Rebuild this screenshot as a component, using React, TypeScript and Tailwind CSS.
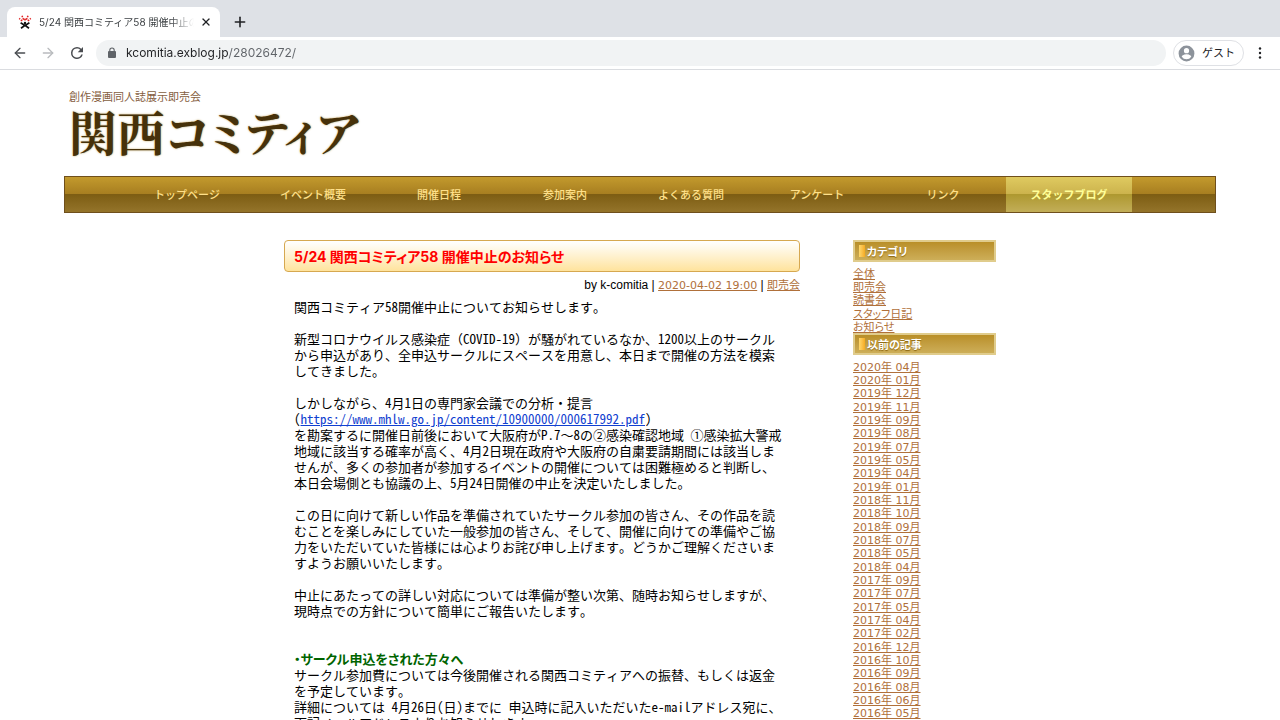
import { ArrowLeft, ArrowRight, Plus, X } from "lucide-react";

const NAV = [
  "トップページ",
  "イベント概要",
  "開催日程",
  "参加案内",
  "よくある質問",
  "アンケート",
  "リンク",
  "スタッフブログ",
];

const CATEGORIES = ["全体", "即売会", "読書会", "スタッフ日記", "お知らせ"];

const ARCHIVES = [
  "2020年 04月", "2020年 01月",
  "2019年 12月", "2019年 11月", "2019年 09月", "2019年 08月", "2019年 07月", "2019年 05月", "2019年 04月", "2019年 01月",
  "2018年 11月", "2018年 10月", "2018年 09月", "2018年 07月", "2018年 05月", "2018年 04月",
  "2017年 09月", "2017年 07月", "2017年 05月", "2017年 04月", "2017年 02月",
  "2016年 12月", "2016年 10月", "2016年 09月", "2016年 08月", "2016年 06月", "2016年 05月",
];

const PDF_URL = "https://www.mhlw.go.jp/content/10900000/000617992.pdf";

function Lines({ rows }: { rows: string[] }) {
  return (
    <p className="mb-4">
      {rows.map(row => <span key={row} className="block whitespace-pre">{row}</span>)}
    </p>
  );
}

function Favicon() {
  return (
    <svg viewBox="0 0 14 14" className="size-[14px] shrink-0" aria-hidden="true">
      <g stroke="#e02020" strokeWidth="1.5" strokeDasharray="1.8 1">
        <path d="M4.2 6 1.2 3.4M5.6 4.8 4 .8M8.4 4.8 10 .8M9.800 6l3-2.600M7 5.400V2.600" />
      </g>
      <circle cx="7" cy="8" r="1.200" fill="#111" />
      <path d="M2.600 7.800 7 10.400l4.400-2.600M3 13.200l4-3 4 3" fill="none" stroke="#111" strokeWidth="1.700" />
    </svg>
  );
}

function BrowserBar() {
  return (
    <header className="shrink-0 font-['Inter','Noto_Sans_CJK_JP',sans-serif]">
      <div className="flex h-[37px] items-end bg-[#dee1e6] pl-[7px]">
        <div className="flex h-[30px] w-[213px] items-center rounded-t-lg bg-white pr-2 pl-[11px]">
          <Favicon />
          <span className="ml-[7px] w-[155px] overflow-hidden text-[10px] whitespace-nowrap text-[#3c4043] [mask-image:linear-gradient(90deg,#000_85%,transparent)]">
            5/24 関西コミティア58 開催中止のお知らせ
          </span>
          <button aria-label="タブを閉じる" className="ml-auto flex size-3 items-center justify-center">
            <X className="size-3 text-[#202124]" strokeWidth={2.6} />
          </button>
        </div>
        <button aria-label="新しいタブ" className="ml-3 flex h-[30px] items-center">
          <Plus className="size-4 text-[#202124]" strokeWidth={2.4} />
        </button>
      </div>
      <div className="flex h-[33px] items-center border-b border-[#dadce0] bg-white px-3">
        <button aria-label="戻る"><ArrowLeft className="size-4 text-[#4a4d51]" /></button>
        <button aria-label="進む" className="ml-3"><ArrowRight className="size-4 text-[#b9bbbe]" /></button>
        <button aria-label="再読み込み" className="ml-3">
          <svg viewBox="0 0 24 24" className="size-[18px] fill-[#4a4d51]">
            <path d="M17.65 6.35A7.96 7.96 0 0 0 12 4a8 8 0 1 0 7.73 10h-2.08A6 6 0 1 1 12 6c1.66 0 3.14.69 4.22 1.78L13 11h7V4l-2.35 2.35z" />
          </svg>
        </button>
        <label className="ml-[10px] flex h-[26px] flex-1 items-center rounded-full bg-[#f1f3f4] pl-[10px]">
          <svg viewBox="0 0 24 24" className="size-3 fill-[#5f6368]" aria-hidden="true">
            <path d="M18 8h-.5V6.5a5.500 5.500 0 0 0-11 0V8H6a2 2 0 0 0-2 2v10a2 2 0 0 0 2 2h12a2 2 0 0 0 2-2V10a2 2 0 0 0-2-2zM8.700 6.500a3.300 3.300 0 0 1 6.600 0V8H8.700z" />
          </svg>
          <input
            aria-label="アドレス"
            defaultValue="kcomitia.exblog.jp/28026472/"
            className="ml-2 flex-1 bg-[linear-gradient(90deg,#202124_102px,#5f6368_102px)] bg-clip-text text-[12px] text-transparent outline-none"
          />
        </label>
        <button className="ml-[7px] flex h-[26px] w-[71px] items-center rounded-full border border-[#dfe1e5] pl-[3px] text-[11px] text-[#202124]">
          <svg viewBox="0 0 24 24" className="size-[19px] fill-[#8d939b]" aria-hidden="true">
            <path d="M12 2a10 10 0 1 0 0 20 10 10 0 0 0 0-20zm0 3.200a3.300 3.300 0 1 1 0 6.600 3.300 3.300 0 0 1 0-6.600zM12 19.200a7.200 7.200 0 0 1-6-3.200c0-2 4-3.100 6-3.100s6 1.100 6 3.100a7.200 7.200 0 0 1-6 3.200z" />
          </svg>
          <span className="ml-[6px]">ゲスト</span>
        </button>
        <button aria-label="メニュー" className="ml-2">
          <svg viewBox="0 0 16 16" className="size-4 fill-[#202124]">
            <circle cx="8" cy="3.500" r="1.200" />
            <circle cx="8" cy="8" r="1.200" />
            <circle cx="8" cy="12.500" r="1.200" />
          </svg>
        </button>
      </div>
    </header>
  );
}

function SideHeading({ children }: { children: string }) {
  return (
    <h2 className="flex h-[22px] items-center border-2 border-[#e0cc8c] bg-linear-to-b from-[#b98f27] to-[#cdae58] pl-1 text-[11px] leading-4 font-bold text-white [font-feature-settings:'palt'] [text-shadow:0_1px_1px_#8a6510]">
      <span className="mr-[2px] h-3 w-[6px] bg-linear-to-r from-[#ffd86a] to-[#f5ab1e]" />
      <span className="pt-[3px]">{children}</span>
    </h2>
  );
}

function SideList({ items }: { items: string[] }) {
  return (
    <ul className="mt-[6px] -mb-px text-[11px] leading-[13px] [font-feature-settings:'palt']">
      {items.map(item => (
        <li key={item} className="nth-[3n]:mb-px">
          <a href="#" className="text-[#b0703a] underline">{item}</a>
        </li>
      ))}
    </ul>
  );
}

export default function App() {
  return (
    <div className="flex h-screen flex-col overflow-hidden bg-white font-['Liberation_Sans','Noto_Sans_CJK_JP',sans-serif] text-black">
      <BrowserBar />

      <div className="mx-auto w-[90%]">
        <div className="h-[106px] pt-[19px] pl-[5px]">
          <p className="text-[11px] leading-4 text-[#86603f]">創作漫画同人誌展示即売会</p>
          <h1 className="font-['Noto_Serif_CJK_JP','Noto_Sans_CJK_JP',serif] text-[48px] leading-[52px] font-bold text-[#46310a] [font-feature-settings:'palt'] [text-shadow:0_0_2px_#b99d55]">
            関西コミティア
          </h1>
        </div>

        {/* Global navigation */}
        <nav className="flex h-[37px] justify-center border border-[#6f4f1c] bg-[linear-gradient(#c39a2d,#a67d20_50%,#7d5d13_50%,#94742a)] pr-6">
          {NAV.map((label, i) => (
            <a
              key={label}
              href="#"
              className={i === NAV.length - 1
                ? "flex w-[126px] items-center justify-center bg-[linear-gradient(#dfca60,#cbb24c_50%,#ae9830_50%,#c2ae58)] pt-[2px] text-[11px] font-bold text-[#ffff99]"
                : "flex w-[126px] items-center justify-center pt-[2px] text-[11px] font-medium text-[#ffe08a]"}
            >
              {label}
            </a>
          ))}
        </nav>
      </div>

      <div className="mx-auto mt-[27px] flex w-full max-w-[712px] gap-[53px]">
        <main className="min-w-0 flex-1">
          <h2 className="flex h-8 items-center rounded-[4px] border border-[#d6a850] bg-linear-to-b from-white to-[#ffe39c] pl-[9px] font-['Inter','Noto_Sans_CJK_JP',sans-serif] text-[14px] font-bold text-[#ff0000] [font-feature-settings:'palt']">
            5/24 関西コミティア58 開催中止のお知らせ
          </h2>
          <p className="mt-[5px] text-right text-[12px] leading-4">
            by k-comitia |{" "}
            <a href="#" className="font-['DejaVu_Sans',sans-serif] text-[11px] text-[#b0703a] underline">2020-04-02 19:00</a>
            {" | "}
            <a href="#" className="text-[11px] text-[#b0703a] underline">即売会</a>
          </p>

          <article className="mt-[5px] pl-[10px] font-['Noto_Sans_Mono_CJK_JP','Noto_Sans_CJK_JP',monospace] text-[13px] leading-4">
            <Lines rows={["関西コミティア58開催中止についてお知らせします。"]} />
            <Lines
              rows={[
                "新型コロナウイルス感染症（COVID-19）が騒がれているなか、1200以上のサークル",
                "から申込があり、全申込サークルにスペースを用意し、本日まで開催の方法を模索",
                "してきました。",
              ]}
            />
            <p>
              しかしながら、4月1日の専門家会議での分析・提言<br />
              (<a href="#" className="text-[#1040d0] underline">{PDF_URL}</a>)
            </p>
            <Lines
              rows={[
                "を勘案するに開催日前後において大阪府がP.7～8の②感染確認地域 ①感染拡大警戒",
                "地域に該当する確率が高く、4月2日現在政府や大阪府の自粛要請期間には該当しま",
                "せんが、多くの参加者が参加するイベントの開催については困難極めると判断し、",
                "本日会場側とも協議の上、5月24日開催の中止を決定いたしました。",
              ]}
            />
            <Lines
              rows={[
                "この日に向けて新しい作品を準備されていたサークル参加の皆さん、その作品を読",
                "むことを楽しみにしていた一般参加の皆さん、そして、開催に向けての準備やご協",
                "力をいただいていた皆様には心よりお詫び申し上げます。どうかご理解くださいま",
                "すようお願いいたします。",
              ]}
            />
            <Lines
              rows={[
                "中止にあたっての詳しい対応については準備が整い次第、随時お知らせしますが、",
                "現時点での方針について簡単にご報告いたします。",
              ]}
            />
            <h3 className="mt-8 font-['Noto_Sans_CJK_JP',sans-serif] font-bold text-[#006400] [font-feature-settings:'palt']">
              ・サークル申込をされた方々へ
            </h3>
            <Lines
              rows={[
                "サークル参加費については今後開催される関西コミティアへの振替、もしくは返金",
                "を予定しています。",
                "詳細については 4月26日(日)までに 申込時に記入いただいたe-mailアドレス宛に、",
                "下記メールアドレスよりお知らせします。",
              ]}
            />
          </article>
        </main>

        <aside className="w-[143px] shrink-0 font-['DejaVu_Sans','Noto_Sans_CJK_JP',sans-serif]">
          <SideHeading>カテゴリ</SideHeading>
          <SideList items={CATEGORIES} />
          <SideHeading>以前の記事</SideHeading>
          <SideList items={ARCHIVES} />
        </aside>
      </div>
    </div>
  );
}
